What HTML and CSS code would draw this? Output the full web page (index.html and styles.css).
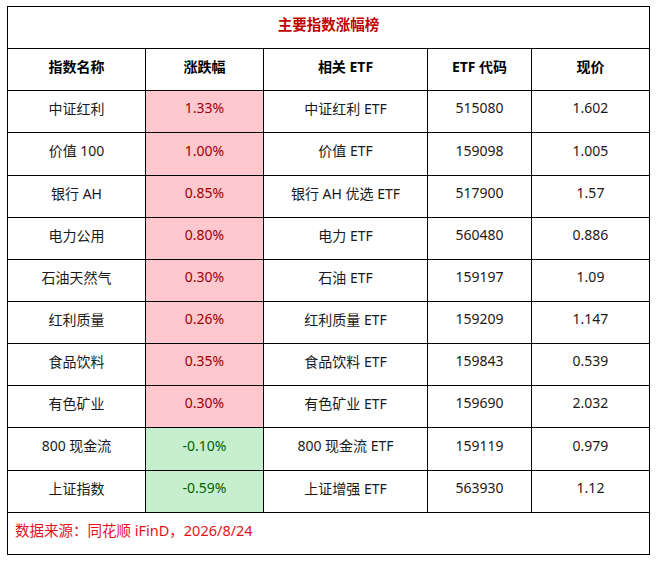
FILE: index.html
```html
<!DOCTYPE html>
<html lang="zh-CN">
<head>
<meta charset="utf-8">
<title>主要指数涨幅榜</title>
<link rel="stylesheet" href="styles.css">
</head>
<body>
<div class="wrap">
<table class="board">
  <colgroup>
    <col class="c1"><col class="c2"><col class="c3"><col class="c4"><col class="c5">
  </colgroup>
  <tr class="title-row"><td colspan="5" class="title">主要指数涨幅榜</td></tr>
  <tr class="head"><th>指数名称</th><th>涨跌幅</th><th>相关 ETF</th><th>ETF 代码</th><th>现价</th></tr>
  <tr><td>中证红利</td><td class="up">1.33%</td><td>中证红利 ETF</td><td>515080</td><td>1.602</td></tr>
  <tr class="tall"><td>价值 100</td><td class="up">1.00%</td><td>价值 ETF</td><td>159098</td><td>1.005</td></tr>
  <tr><td>银行 AH</td><td class="up">0.85%</td><td>银行 AH 优选 ETF</td><td>517900</td><td>1.57</td></tr>
  <tr><td>电力公用</td><td class="up">0.80%</td><td>电力 ETF</td><td>560480</td><td>0.886</td></tr>
  <tr><td>石油天然气</td><td class="up">0.30%</td><td>石油 ETF</td><td>159197</td><td>1.09</td></tr>
  <tr><td>红利质量</td><td class="up">0.26%</td><td>红利质量 ETF</td><td>159209</td><td>1.147</td></tr>
  <tr><td>食品饮料</td><td class="up">0.35%</td><td>食品饮料 ETF</td><td>159843</td><td>0.539</td></tr>
  <tr><td>有色矿业</td><td class="up">0.30%</td><td>有色矿业 ETF</td><td>159690</td><td>2.032</td></tr>
  <tr class="tall"><td>800 现金流</td><td class="down">-0.10%</td><td>800 现金流 ETF</td><td>159119</td><td>0.979</td></tr>
  <tr><td>上证指数</td><td class="down">-0.59%</td><td>上证增强 ETF</td><td>563930</td><td>1.12</td></tr>
  <tr class="foot-row"><td colspan="5" class="source">数据来源：同花顺 iFinD，2026/8/24</td></tr>
</table>
</div>
</body>
</html>
```
FILE: styles.css
```css
html, body {
  margin: 0;
  padding: 0;
  background: #ffffff;
}
.wrap {
  padding: 6px 0 0 7px;
}
.board {
  border-collapse: collapse;
  table-layout: fixed;
  width: 642px;
  font-family: "Noto Sans", "Noto Sans CJK SC", sans-serif;
  font-size: 14px;
  color: #1a1a1a;
}
.c1 { width: 138px; }
.c2 { width: 118px; }
.c3 { width: 164px; }
.c4 { width: 104px; }
.c5 { width: 118px; }
.board tr {
  height: 42px;
}
.board tr.tall {
  height: 43px;
}
.board td, .board th {
  border: 1px solid #000;
  text-align: center;
  vertical-align: middle;
  padding: 0 0 8px 0;
  white-space: nowrap;
}
.board th {
  font-weight: bold;
  color: #000;
}
.board .title {
  color: #c00000;
  font-weight: bold;
  font-size: 14.5px;
}
.board .source {
  text-align: left;
  color: #e4121c;
  font-size: 14.5px;
  padding-left: 7px;
}
.board .up {
  background: #ffc7ce;
  color: #9c0006;
}
.board .down {
  background: #c6efce;
  color: #006100;
}
```
